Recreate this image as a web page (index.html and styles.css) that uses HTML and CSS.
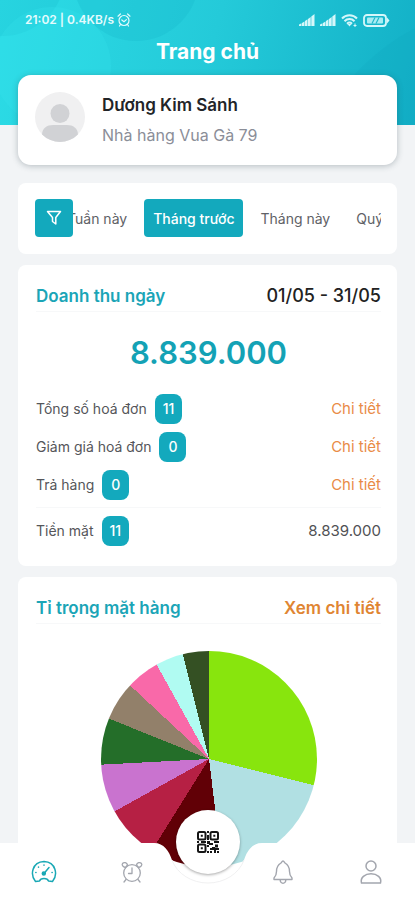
FILE: index.html
```html
<!DOCTYPE html>
<html lang="vi">
<head>
<meta charset="utf-8">
<meta name="viewport" content="width=device-width, initial-scale=1">
<title>Trang chủ</title>
<link rel="stylesheet" href="styles.css">
</head>
<body>
<header class="header">
  <svg class="header-art" viewBox="0 0 415 125" preserveAspectRatio="xMidYMin slice" aria-hidden="true">
    <circle cx="136" cy="-22" r="63" fill="#12b5c9" opacity=".25"/>
    <circle cx="2" cy="-28" r="64" fill="#12b5c9" opacity=".2"/>
    <circle cx="52" cy="66" r="59" fill="#35e0ea" opacity=".3"/>
    <path d="M415 28C370 52 335 90 322 125H415Z" fill="#0ea5bd" opacity=".2"/>
  </svg>
  <div class="status">
    <div class="status-side">
      <span>21:02 | 0.4KB/s</span>
      <svg width="14" height="14" viewBox="0 0 14 14" fill="none" stroke="#e4fbfd" stroke-width="1.2" stroke-linecap="round" aria-hidden="true"><circle cx="7" cy="7.5" r="5"/><path d="M1 3.2 3.4 1M13 3.2 10.600 1M4.800 7 7 8.800 9.400 6.600M3.500 11.500 2.500 13M10.500 11.500l1 1.500"/></svg>
    </div>
    <div class="status-side status-icons">
      <svg width="16" height="12" viewBox="0 0 16 12" fill="#d5f7fa" aria-hidden="true"><path d="M0 12V10.500L2.500 9.200V12ZM3 12V9l2.500-1.500v4.500ZM6 12V7l2.500-1.700V12ZM9 12V5l2.700-2V12ZM12.300 12V2.500L15.500 0V12Z"/></svg>
      <svg width="16" height="12" viewBox="0 0 16 12" fill="#d5f7fa" aria-hidden="true"><path d="M0 12V10.500L2.500 9.200V12ZM3 12V9l2.500-1.500v4.500ZM6 12V7l2.500-1.700V12ZM9 12V5l2.700-2V12ZM12.300 12V2.500L15.500 0V12Z"/></svg>
      <svg width="17" height="13" viewBox="0 0 17 13" fill="none" stroke="#d5f7fa" stroke-width="2" aria-hidden="true"><path d="M1 4.500C5 .2 12 .2 16 4.500M3.500 7.200c2.800-2.900 7.200-2.900 10 0M6 9.700c1.500-1.400 3.500-1.400 5 0"/><path d="M8.500 12.500 6.500 10h4Z" fill="#d5f7fa" stroke="none"/><path d="M14 9.500v3.500M12.500 11.500h3" stroke-width="1"/></svg>
      <svg width="27" height="13" viewBox="0 0 27 13" aria-hidden="true"><rect x="1" y="1" width="22" height="11" rx="3" fill="none" stroke="#d5f7fa" stroke-width="1.800"/><path d="M24 3.500 26.500 6.500 24 9.500Z" fill="#d5f7fa"/><rect x="4" y="3.500" width="16" height="6" rx="1" fill="#a9edf3"/><path d="M9 9.500 12 3.500M13 9.500l3-6" stroke="#20b9cb" stroke-width="1.200"/></svg>
    </div>
  </div>
  <h1 class="title">Trang chủ</h1>
</header>

<main class="main">
  <section class="card profile">
    <svg width="50" height="50" viewBox="0 0 50 50" aria-hidden="true">
      <defs><clipPath id="face"><circle cx="25" cy="25" r="25"/></clipPath></defs>
      <circle cx="25" cy="25" r="25" fill="#f0f0f1"/>
      <g clip-path="url(#face)" fill="#d1d2d5"><circle cx="25" cy="21.500" r="9.500"/><path d="M7 43C7 36 12 33 18 33H32C38 33 43 36 43 43L38 50H12Z"/></g>
    </svg>
    <div class="profile-text">
      <div class="name">Dương Kim Sánh</div>
      <div class="place">Nhà hàng Vua Gà 79</div>
    </div>
  </section>

  <section class="card periods">
    <button class="filter" type="button" aria-label="Bộ lọc">
      <svg width="16" height="16" viewBox="0 0 16 16" fill="none" stroke="#fff" stroke-width="1.500" stroke-linejoin="round" aria-hidden="true"><path d="M1.500 1.500H14.500L9.800 7.500V14L6.500 11.500V7.500Z"/></svg>
    </button>
    <div class="scroller">
      <div class="tabs">
        <button class="tab" type="button">Tuần này</button>
        <button class="tab active" type="button">Tháng trước</button>
        <button class="tab" type="button">Tháng này</button>
        <button class="tab" type="button">Quý</button>
      </div>
    </div>
  </section>

  <section class="card">
    <div class="card-head">
      <h2>Doanh thu ngày</h2>
      <span class="range">01/05 - 31/05</span>
    </div>
    <div class="total">8.839.000</div>
    <div class="rows">
      <div class="row"><span>Tổng số hoá đơn</span><span class="count">11</span><a href="#hoa-don">Chi tiết</a></div>
      <div class="row"><span>Giảm giá hoá đơn</span><span class="count">0</span><a href="#giam-gia">Chi tiết</a></div>
      <div class="row"><span>Trả hàng</span><span class="count">0</span><a href="#tra-hang">Chi tiết</a></div>
    </div>
    <div class="rows cash">
      <div class="row"><span>Tiền mặt</span><span class="count">11</span><span class="amount">8.839.000</span></div>
    </div>
  </section>

  <section class="card">
    <div class="card-head">
      <h2>Tỉ trọng mặt hàng</h2>
      <a class="more" href="#mat-hang">Xem chi tiết</a>
    </div>
    <div class="pie"></div>
  </section>
</main>

<nav class="nav">
  <div class="nav-back">
    <span class="nav-fill"></span>
    <svg width="124" height="57" viewBox="0 0 124 57" aria-hidden="true"><path d="M0 0H8C18 0 23 8 26 17C31 31 46 40 62 40S93 31 98 17C101 8 106 0 116 0H124V57H0Z" fill="#fff"/><path d="M26 17C31 31 46 40 62 40S93 31 98 17" fill="none" stroke="#f0f0f1" stroke-width="1"/></svg>
    <span class="nav-fill"></span>
  </div>
  <a class="nav-item on" href="#home" aria-label="Trang chủ">
    <svg width="26" height="26" viewBox="0 0 26 26" fill="none" stroke="currentColor" stroke-width="1.500" stroke-linecap="round" stroke-linejoin="round" aria-hidden="true"><path d="M4.500 22.500C-1 16 .8 3 13 2.500C25.200 3 27 16 21.500 22.500L17.500 22C16.500 18.500 9.500 18.500 8.500 22Z"/><path d="M13 14.500 18 8.500"/><circle cx="12.800" cy="14.500" r="1.500" fill="currentColor"/><path d="M13 6v.2M7.500 8v.2M4.800 13.500h.2M21 13.500h.2"/></svg>
  </a>
  <a class="nav-item" href="#time" aria-label="Ca làm việc">
    <svg width="24" height="24" viewBox="0 0 24 24" fill="none" stroke="currentColor" stroke-width="1.300" stroke-linecap="round" stroke-linejoin="round" aria-hidden="true"><circle cx="12" cy="13" r="8.300"/><path d="M12 8v5.500H8.500M6 19.500 4 22M18 19.500l2 2.500M5.500 7.500C3 7 1.500 5 2.500 3.500C4 1.800 7 2.500 7.500 5ZM18.500 7.500C21 7 22.500 5 21.500 3.500C20 1.800 17 2.500 16.500 5Z"/></svg>
  </a>
  <button class="scan" type="button" aria-label="Quét mã QR">
    <svg width="22" height="22" viewBox="0 0 22 22" aria-hidden="true"><g fill="none" stroke="#151515" stroke-width="2"><rect x="1" y="1" width="7.500" height="7.500" rx="1.500"/><rect x="13.500" y="1" width="7.500" height="7.500" rx="1.500"/><rect x="1" y="13.500" width="7.500" height="7.500" rx="1.500"/></g><path fill="#151515" d="M3.800 3.800h2V5.800h-2ZM16.300 3.800h2v2h-2ZM3.800 16.300h2v2h-2ZM10 0h2v2h-2ZM10 4h2v5h-2ZM0 10h2v2H0ZM4 10h5v2H4ZM10 10h3v2h3v2h-4v-1h-2ZM17 10h5v2h-5ZM10 14h2v2h-2ZM10 20h2v2h-2ZM18 13.500h3v3h-3ZM15 16h3v1h4v2h-3v3h-2v-3h-4v-2h2ZM20 20h2v2h-2ZM13 20h2v2h-2Z"/></svg>
  </button>
  <a class="nav-item" href="#alerts" aria-label="Thông báo">
    <svg width="24" height="26" viewBox="0 0 24 26" fill="none" stroke="currentColor" stroke-width="1.400" stroke-linecap="round" stroke-linejoin="round" aria-hidden="true"><path d="M12 2C11 2 10.500 3.500 10 4C6.500 6 5.500 9 5.500 12.500C5.500 16 4.500 17.500 3 19V20.500H21V19C19.500 17.500 18.500 16 18.500 12.500C18.500 9 17.500 6 14 4C13.500 3.500 13 2 12 2ZM9.200 20.700C9 25.500 15 25.500 14.800 20.700"/></svg>
  </a>
  <a class="nav-item" href="#account" aria-label="Tài khoản">
    <svg width="24" height="26" viewBox="0 0 24 26" fill="none" stroke="currentColor" stroke-width="1.500" stroke-linejoin="round" aria-hidden="true"><circle cx="12" cy="7" r="5"/><path d="M2.500 24C1 18.500 6 14.800 12 14.800S23 18.500 21.500 24Z"/></svg>
  </a>
</nav>
</body>
</html>
```
FILE: styles.css
```css
* { box-sizing: border-box; }

html { scrollbar-width: none; }

body {
  margin: 0;
  background: #f2f4f6;
  color: #55565a;
  font-family: Inter, "Noto Sans", sans-serif;
  font-size: 14px;
  line-height: 20px;
}

h1, h2 { margin: 0; }
a { text-decoration: none; color: #e98b47; }
button { font: inherit; border: 0; padding: 0; cursor: pointer; }
svg { display: block; flex: none; }

.header {
  position: relative;
  padding-top: 10px;
  height: 125px;
  background: linear-gradient(105deg, #2cdce6 0%, #24cad9 50%, #12afc6 100%);
  color: #fff;
}

.header-art { position: absolute; inset: 0; width: 100%; height: 100%; }

.status {
  position: relative;
  display: flex;
  justify-content: space-between;
  padding: 0 25px;
  color: #e4fbfd;
  font-size: 12px;
  font-weight: 600;
}

.status-side { display: flex; align-items: center; gap: 3px; }
.status-icons { gap: 5px; }

.title {
  position: relative;
  margin-top: 8px;
  text-align: center;
  font-size: 21px;
  line-height: 28px;
  font-weight: 700;
}

.main {
  display: flex;
  flex-direction: column;
  gap: 11px;
  margin-top: -50px;
  padding: 0 18px 80px;
}

.card { background: #fff; border-radius: 8px; padding: 16px 16px 20px 18px; }

.profile {
  position: relative;
  display: flex;
  align-items: flex-start;
  gap: 17px;
  margin-bottom: 7px;
  padding: 17px;
  border-radius: 13px;
  box-shadow: 0 1px 6px rgba(40, 60, 70, .3);
}

.profile-text { display: flex; flex-direction: column; gap: 4px; line-height: 26px; }
.name { color: #222428; font-size: 17px; font-weight: 600; }
.place { color: #8b8e98; font-size: 16px; }

.periods { display: flex; padding: 16px 16px 17px 17px; }

.filter {
  display: flex;
  align-items: center;
  justify-content: center;
  flex: none;
  width: 38px;
  height: 38px;
  border-radius: 4px;
  background: #13a9bd;
}

.scroller { flex: 1; min-width: 0; overflow: hidden; }
.tabs { display: flex; gap: 8px; margin-left: -15px; }

.tab {
  flex: none;
  height: 38px;
  padding: 2px 9px 0;
  border-radius: 4px;
  background: transparent;
  color: #606166;
}

.tab.active { background: #13a9bd; color: #fff; font-weight: 500; }

.card-head {
  display: flex;
  align-items: center;
  justify-content: space-between;
  border-bottom: 1px solid #f7f8f9;
  font-size: 17px;
  line-height: 30px;
}

h2 { font-size: 17px; font-weight: 600; color: #1ba5b7; }
.range { color: #222; font-size: 18px; font-weight: 500; }
.more { color: #e08532; font-weight: 600; }

.total {
  margin: 22px 0;
  text-align: center;
  color: #14a2b5;
  font-size: 31px;
  line-height: 38px;
  font-weight: 600;
}

.rows { display: flex; flex-direction: column; gap: 8px; }
.row { display: flex; align-items: center; gap: 8px; line-height: 30px; }
.row > :last-child { margin-left: auto; font-size: 15px; }
.amount { color: #505154; }

.count {
  min-width: 27px;
  padding: 0 8px;
  border-radius: 8px;
  background: #13a9bd;
  color: #fff;
  text-align: center;
  font-weight: 500;
}

.cash { margin-top: 7px; padding-top: 8px; border-top: 1px solid #f7f8f9; }

.pie {
  width: 216px;
  height: 216px;
  margin: 27px auto 0;
  border-radius: 50%;
  background: conic-gradient(
    #88e50d 0deg 104deg,
    #b1e0e3 104deg 173deg,
    #610006 173deg 212deg,
    #b62044 212deg 241deg,
    #c973cf 241deg 267deg,
    #246e29 267deg 292deg,
    #92806a 292deg 313deg,
    #f969a9 313deg 331deg,
    #b0fbf2 331deg 346deg,
    #345023 346deg 360deg
  );
}

.nav {
  position: fixed;
  inset: auto 0 0 0;
  display: grid;
  grid-template-columns: 1fr 1fr 64px 1fr 1fr;
  height: 57px;
}

.nav-back { position: absolute; inset: 0; display: flex; }
.nav-fill { flex: 1; background: #fff; }

.nav-item {
  position: relative;
  display: flex;
  align-items: center;
  justify-content: center;
  color: #a3a6ae;
}

.nav-item.on { color: #19a8b5; }

.scan {
  position: relative;
  display: flex;
  align-items: center;
  justify-content: center;
  width: 64px;
  height: 64px;
  margin-top: -33px;
  border-radius: 50%;
  background: #fff;
  box-shadow: 0 1px 3px rgba(0, 0, 0, .35);
}
```
